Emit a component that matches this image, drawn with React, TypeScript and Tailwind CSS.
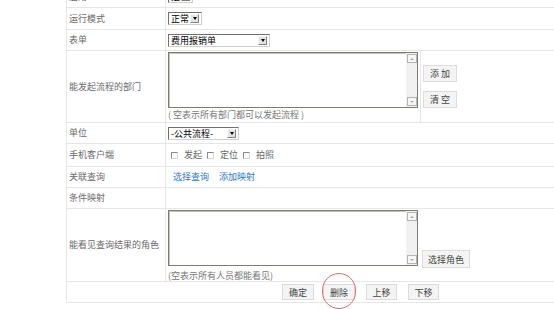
import React from "react";

const rowCls = "flex border-t border-l border-[#e6e6e6]";
const labelCls =
  "w-[99px] shrink-0 border-r border-[#e6e6e6] pl-[2px] flex items-center text-[#6a6a6a]";

function Select({ w, text }: { w: number; text: string }) {
  return (
    <div
      className="flex items-center h-[13px] border border-t-[#707070] border-l-[#707070] border-r-[#cfcfcf] border-b-[#cfcfcf] bg-white pl-[2px] pr-[2px]"
      style={{ width: w }}
    >
      <span className="flex-1 text-black leading-none">{text}</span>
      <span className="w-[9px] h-[9px] bg-[#e4e4e4] border border-t-[#f8f8f8] border-l-[#f8f8f8] border-r-[#808080] border-b-[#808080] flex items-center justify-center">
        <span className="block w-0 h-0 border-l-[2.5px] border-r-[2.5px] border-t-[3px] border-l-transparent border-r-transparent border-t-black" />
      </span>
    </div>
  );
}

function ScrollBox({ up }: { up: boolean }) {
  return (
    <div className="h-[9px] w-[10px] border border-[#b4b4b4] bg-[#f6f6f6] flex items-center justify-center">
      {up ? (
        <span className="block w-0 h-0 border-l-[2px] border-r-[2px] border-b-[2px] border-l-transparent border-r-transparent border-b-[#aaa]" />
      ) : (
        <span className="block w-0 h-0 border-l-[2px] border-r-[2px] border-t-[2px] border-l-transparent border-r-transparent border-t-[#aaa]" />
      )}
    </div>
  );
}

function Area() {
  return (
    <div className="flex w-[250px] h-[56px] border border-[#7c7c70] shadow-[inset_1px_1px_0_#c4c4bc] bg-white">
      <div className="flex-1" />
      <div className="w-[11px] bg-[#f1f1f1] flex flex-col justify-between items-center py-[1px]">
        <ScrollBox up />
        <ScrollBox up={false} />
      </div>
    </div>
  );
}

function Btn({ children, w, h = 17 }: { children: React.ReactNode; w: number; h?: number }) {
  return (
    <div
      className="flex items-center justify-center bg-[#f4f4f4] border border-[#dcdcdc] text-[#444] leading-none"
      style={{ width: w, height: h }}
    >
      {children}
    </div>
  );
}

function Check({ label }: { label: string }) {
  return (
    <span className="flex items-center">
      <span className="w-[7px] h-[7px] border border-t-[#8a8a8a] border-l-[#8a8a8a] border-r-[#dadada] border-b-[#dadada] bg-white" />
      <span className="ml-[6px] text-[#666]">{label}</span>
    </span>
  );
}

export default function App() {
  return (
    <div className="relative w-[554px] h-[309px] overflow-hidden bg-white text-[9px] font-['Noto_Sans_CJK_SC','Noto_Sans',sans-serif]">
      <div className="ml-[66px] mt-[-15px]">
        <div className={`${rowCls} h-[22px]`}>
          <div className={labelCls}>启用</div>
          <div className="flex items-center pl-[2px]">
            <Select w={25} text="是" />
          </div>
        </div>

        <div className={`${rowCls} h-[22px]`}>
          <div className={labelCls}>运行模式</div>
          <div className="flex items-center pl-[2px]">
            <Select w={34} text="正常" />
          </div>
        </div>

        <div className={`${rowCls} h-[21px]`}>
          <div className={labelCls}>表单</div>
          <div className="flex items-center pl-[2px]">
            <Select w={102} text="费用报销单" />
          </div>
        </div>

        <div className={`${rowCls} h-[72px]`}>
          <div className={labelCls}>能发起流程的部门</div>
          <div className="flex">
            <div className="w-[255px] border-r border-[#e6e6e6] pl-[2px] pt-[1px]">
              <Area />
              <div className="text-[#777] leading-[14px]">( 空表示所有部门都可以发起流程 )</div>
            </div>
            <div className="pl-[2px] pt-[14px] flex flex-col gap-[9px]">
              <Btn w={34}>添 加</Btn>
              <Btn w={34}>清 空</Btn>
            </div>
          </div>
        </div>

        <div className={`${rowCls} h-[21px]`}>
          <div className={labelCls}>单位</div>
          <div className="flex items-center pl-[2px]">
            <Select w={71} text="-公共流程-" />
          </div>
        </div>

        <div className={`${rowCls} h-[23px]`}>
          <div className={labelCls}>手机客户端</div>
          <div className="flex items-center pl-[5px] gap-[5px]">
            <Check label="发起" />
            <Check label="定位" />
            <Check label="拍照" />
          </div>
        </div>

        <div className={`${rowCls} h-[21px]`}>
          <div className={labelCls}>关联查询</div>
          <div className="flex items-center pl-[7px] gap-[10px] text-[#2f78d0]">
            <span>选择查询</span>
            <span>添加映射</span>
          </div>
        </div>

        <div className={`${rowCls} h-[21px]`}>
          <div className={labelCls}>条件映射</div>
          <div />
        </div>

        <div className={`${rowCls} h-[73px]`}>
          <div className={labelCls}>能看见查询结果的角色</div>
          <div className="pl-[2px] pt-[1px]">
            <div className="flex items-start">
              <Area />
              <div className="ml-[4px] mt-[40px]">
                <Btn w={48} h={18}>选择角色</Btn>
              </div>
            </div>
            <div className="text-[#777] leading-[15px]">(空表示所有人员都能看见)</div>
          </div>
        </div>

        <div className={`${rowCls} border-b h-[22px] items-center pl-[215px]`}>
          <Btn w={32} h={16}>确定</Btn>
          <div className="ml-[9px]">
            <Btn w={32} h={16}>删除</Btn>
          </div>
          <div className="ml-[11px]">
            <Btn w={31} h={16}>上移</Btn>
          </div>
          <div className="ml-[11px]">
            <Btn w={31} h={16}>下移</Btn>
          </div>
        </div>
      </div>

      <div className="absolute left-[322px] top-[273px] w-[34px] h-[36px] rounded-full border border-[#e86a6a]" />
    </div>
  );
}
